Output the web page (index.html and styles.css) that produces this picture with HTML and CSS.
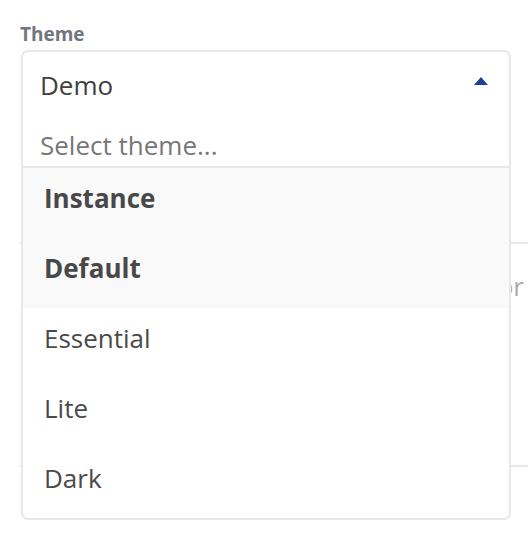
FILE: index.html
```html
<!DOCTYPE html>
<html>
<head>
<meta name="viewport" content="width=device-width, initial-scale=1.0">
<link rel="stylesheet" href="styles.css">
</head>
<body>

<div class="page">
  <div class="field">
    <label class="field-label">Theme</label>
    <div class="select">
      <div class="control">
        <div class="value-row">
          <span class="value">Demo</span>
          <span class="caret"></span>
        </div>
        <div class="search">Select theme...</div>
      </div>
      <ul class="menu">
        <li class="option group">Instance</li>
        <li class="option group">Default</li>
        <li class="option">Essential</li>
        <li class="option">Lite</li>
        <li class="option">Dark</li>
      </ul>
    </div>
  </div>

  <div class="card">
    <div class="card-text">Theme editor</div>
  </div>
</div>

</body>
</html>
```

FILE: styles.css
```css
body {
  margin: 0;
  font-family: "Open Sans", sans-serif;
  background: #fff;
}

.page {
  padding: 22px 0 0 20px;
  min-height: 520px;
}

.field-label {
  display: block;
  font-size: 19px;
  font-weight: 700;
  color: #6f7680;
  line-height: 24px;
  margin-bottom: 4px;
}

.select {
  position: relative;
  width: 490px;
  margin-left: 1px;
}

.control {
  border: 2px solid #e8e8e8;
  border-bottom-width: 0;
  border-radius: 7px 7px 0 0;
  height: 116px;
  box-sizing: content-box;
}

.value-row {
  display: flex;
  align-items: center;
  justify-content: space-between;
  padding: 0 21px 0 17px;
  height: 66px;
}

.value {
  font-size: 26px;
  color: #404040;
}

.caret {
  width: 0;
  height: 0;
  border-left: 7px solid transparent;
  border-right: 7px solid transparent;
  border-bottom: 8px solid #1d3f9c;
  margin-top: -9px;
}

.search {
  padding-left: 17px;
  font-size: 26px;
  color: #777;
  line-height: 34px;
  margin-top: 10px;
}

.menu {
  position: absolute;
  left: 0;
  right: 0;
  top: 116px;
  margin: 0;
  padding: 0;
  list-style: none;
  border: 2px solid #e8e8e8;
  border-radius: 0 0 7px 7px;
  background: #fff;
}

.option {
  height: 70px;
  display: flex;
  align-items: center;
  padding-left: 21px;
  font-size: 26px;
  color: #4a4a4a;
  padding-bottom: 10px;
  box-sizing: border-box;
}

.option.group {
  background: #f9f9f9;
  font-weight: 700;
  color: #484848;
}

.card {
  margin-top: 74px;
  height: 221px;
  border-top: 2px solid #e8e8e8;
  border-bottom: 2px solid #e8e8e8;
  display: flex;
  justify-content: flex-end;
}

.card-text {
  margin-top: 24px;
  margin-right: 4px;
  font-size: 26px;
  color: #aaa;
}
```
